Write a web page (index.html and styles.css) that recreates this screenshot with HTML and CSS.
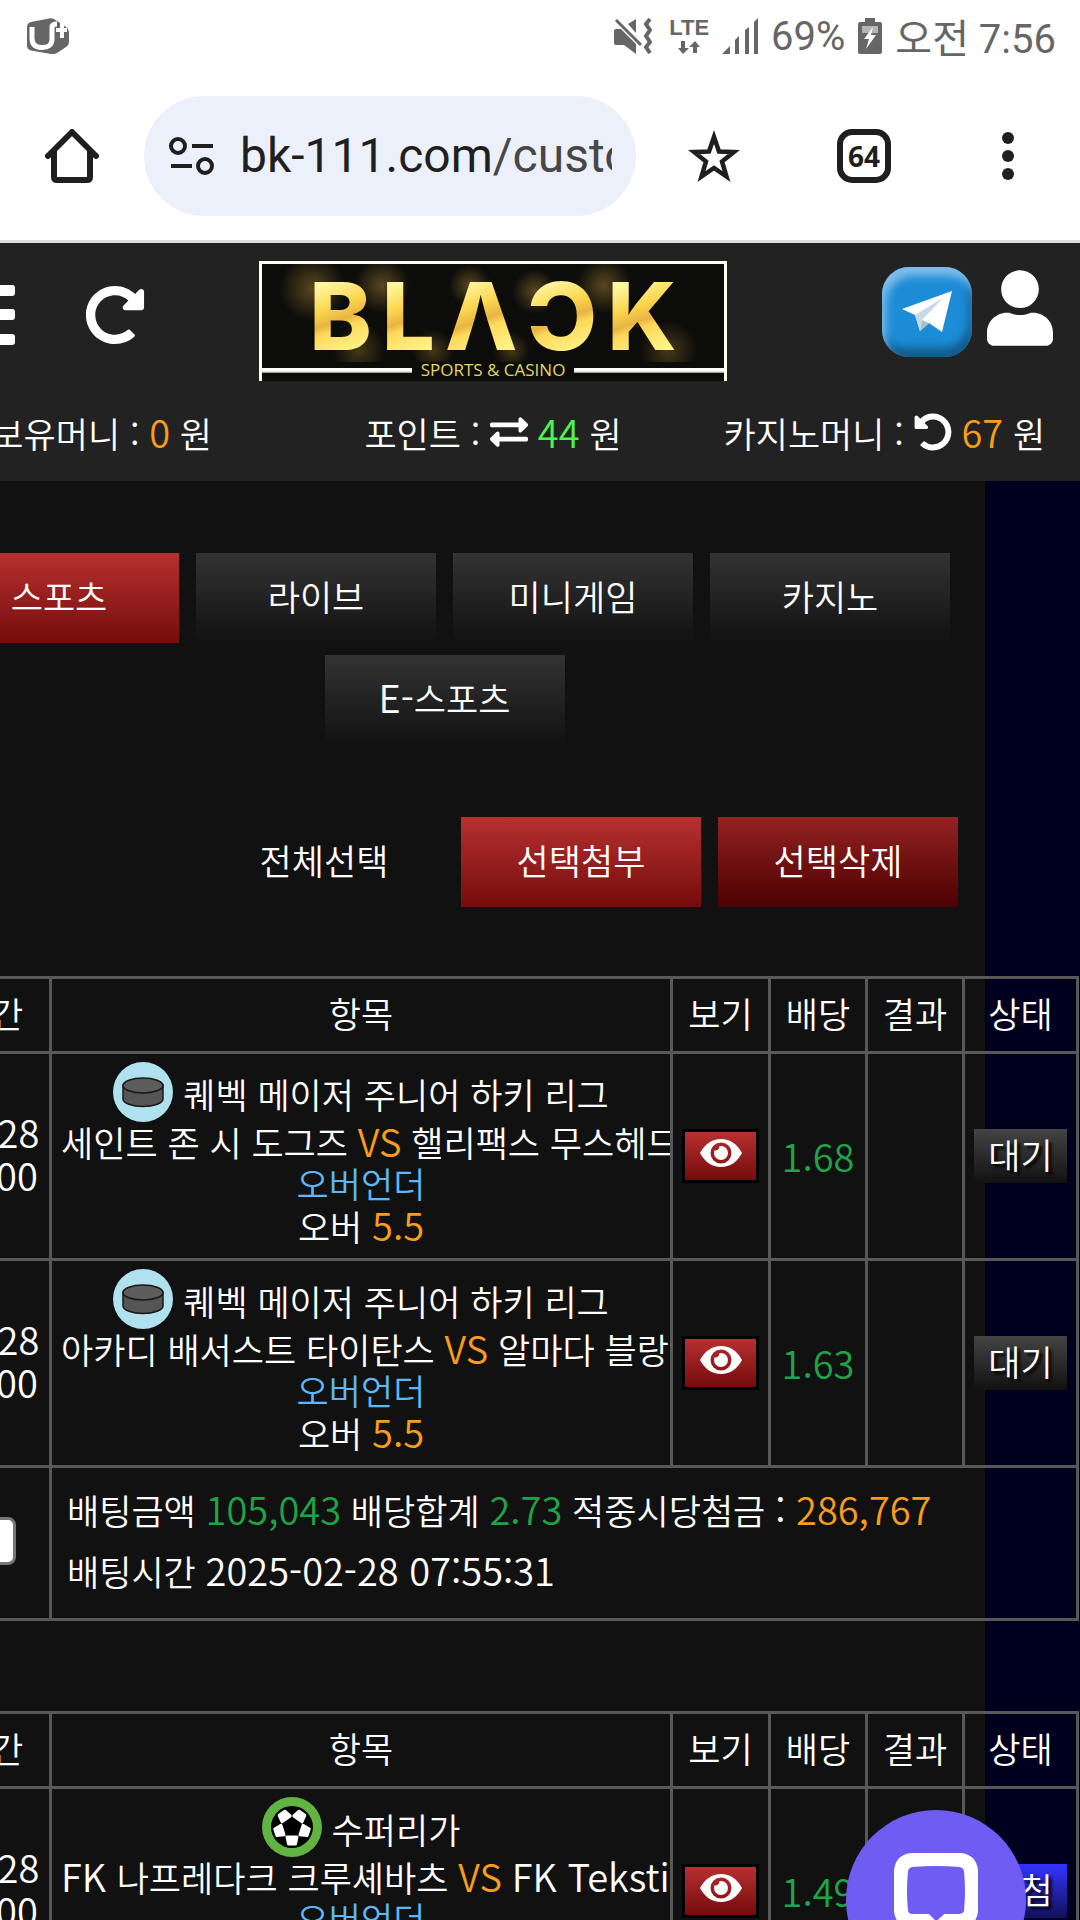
FILE: index.html
```html
<!DOCTYPE html>
<html lang="ko">
<head>
    <meta charset="UTF-8">
    <meta name="viewport" content="width=device-width, initial-scale=1.0">
    <title>BLACK</title>
    <link rel="stylesheet" href="styles.css">
</head>
<body>
    <!-- shared icons -->
    <svg class="defs" aria-hidden="true">
        <symbol id="icon-redo" viewBox="0 0 512 512">
            <path d="M256.455 8c66.269.119 126.437 26.233 170.859 68.685l35.715-35.715C478.149 25.851 504 36.559 504 57.941V192c0 13.255-10.745 24-24 24H345.941c-21.382 0-32.09-25.851-16.971-40.971l41.750-41.750c-30.864-28.899-70.801-44.907-113.230-45.273-92.398-.798-170.283 73.977-169.484 169.442C88.764 348.009 162.184 424 256 424c41.127 0 79.997-14.678 110.629-41.556 4.743-4.161 11.906-3.908 16.368.553l39.662 39.662c4.872 4.872 4.631 12.815-.482 17.433C378.202 479.813 319.926 504 256 504 119.034 504 8.001 392.967 8 256.002 7.999 119.193 119.646 7.755 256.455 8z"/>
        </symbol>
        <symbol id="icon-eye" viewBox="0 0 42 28">
            <path fill-rule="evenodd" d="M0 14C5 5 12 0 21 0s16 5 21 14c-5 9-12 14-21 14S5 23 0 14zM21 3.500a10.500 10.500 0 1 0 0 21 10.500 10.500 0 0 0 0-21z"/>
            <path d="M21 7a7 7 0 1 1-7 7c0-1 .2-2 .6-2.800a3.600 3.600 0 0 0 4.800-3.900C20 7.100 20.500 7 21 7z"/>
        </symbol>
        <symbol id="icon-puck" viewBox="0 0 60 60">
            <circle cx="30" cy="30" r="30" fill="#afe2ee"/>
            <path d="M10 23v14c0 4 9 7.500 20 7.500S50 41 50 37V23z" fill="#555" stroke="#181818" stroke-width="1.500"/>
            <ellipse cx="30" cy="23.500" rx="20" ry="7.500" fill="#5d5d5d" stroke="#181818" stroke-width="1.500"/>
        </symbol>
        <symbol id="icon-ball" viewBox="0 0 60 60">
            <circle cx="30" cy="30" r="30" fill="#61b441"/>
            <circle cx="30" cy="30" r="21" fill="#000"/>
            <g fill="#fff" stroke="#fff" stroke-width="3" stroke-linejoin="round">
                <path d="M25 40h10l-1.500 7h-7z"/>
                <path d="M25 40h10l-1.500 7h-7z" transform="rotate(72 30 30)"/>
                <path d="M25 40h10l-1.500 7h-7z" transform="rotate(144 30 30)"/>
                <path d="M25 40h10l-1.500 7h-7z" transform="rotate(216 30 30)"/>
                <path d="M25 40h10l-1.500 7h-7z" transform="rotate(288 30 30)"/>
            </g>
        </symbol>
    </svg>

    <div class="screen">
        <div class="status-bar">
            <svg class="carrier" viewBox="0 0 42 36">
                <path d="M4 4L22 .5q3-.5 5 .5l12 8q3 2 3 5v10q0 3-3 5l-9 6q-3 1.500-6 1L4 32.500q-4-1-4-5V9q0-4 4-5z" fill="#666"/>
                <path d="M5 9v11q0 9 9 9.500 11 .5 11-8.500V9q0-3 5-3" fill="none" stroke="#fff" stroke-width="5"/>
                <path d="M35 4v16M29 12h11" stroke="#fff" stroke-width="4"/>
            </svg>
            <div class="status-right">
                <svg class="mute" viewBox="0 0 38 36">
                    <path d="M0 13q0-2 2-2h5l15 15v10L10 27H2q-2 0-2-2zM14 6l8-5v14z" fill="#666"/>
                    <path d="M2 2l25 25" stroke="#666" stroke-width="3"/>
                    <path d="M36 1l-4 5 4 6-4 6 4 6-4 5 4 6" fill="none" stroke="#666" stroke-width="4"/>
                </svg>
                <div class="lte">
                    <span>LTE</span>
                    <svg viewBox="0 0 22 13"><path d="M3 0h4v7h4l-6 6-5-6h3zM15 12V6h-4l6-6 5 6h-3v6z" fill="#666"/></svg>
                </div>
                <svg class="signal" viewBox="0 0 36 36">
                    <path d="M0 36l8-8v8zM13 22l4-4v18h-4zM23 12l4-3v27h-4zM32 4l4-4v36h-4z" fill="#666"/>
                </svg>
                <span>69%</span>
                <svg class="battery" viewBox="0 0 24 36">
                    <path d="M7 0h10v4h5q2 0 2 2v28q0 2-2 2H2q-2 0-2-2V6q0-2 2-2h5z" fill="#666"/>
                    <path d="M4 8h16v7H4z" fill="#b5b5b5"/>
                    <path d="M15 9L6 21h5L8 31l10-14h-5z" fill="#fff"/>
                </svg>
                <span>오전 7:56</span>
            </div>
        </div>

        <div class="toolbar">
            <button class="tool home" aria-label="홈">
                <svg width="54" height="54" viewBox="0 0 54 54">
                    <path d="M3 27L27 3l24 24" fill="none" stroke="#1f1f1f" stroke-width="6" stroke-linecap="round" stroke-linejoin="round"/>
                    <path d="M9 21v27q0 3 3 3h30q3 0 3-3V21" fill="none" stroke="#1f1f1f" stroke-width="6"/>
                </svg>
            </button>
            <div class="address">
                <svg width="46" height="38" viewBox="0 0 46 38" fill="none" stroke="#1f1f1f">
                    <circle cx="9" cy="9" r="7" stroke-width="4"/>
                    <circle cx="36" cy="29" r="7" stroke-width="4"/>
                    <path d="M23 9h21M2 29h21" stroke-width="4"/>
                </svg>
                <a class="url" href="#">bk-111.com<span>/customer</span></a>
            </div>
            <button class="tool" aria-label="북마크">
                <svg width="52" height="52" viewBox="0 0 52 52">
                    <path d="M26 7l5 14.500 15 .5-12 9.500 4.500 15L26 38l-12.500 8.500 4.500-15L6 22l15-.5z" fill="none" stroke="#1f1f1f" stroke-width="4.500"/>
                </svg>
            </button>
            <button class="tool"><span class="tab-count">64</span></button>
            <button class="tool menu" aria-label="메뉴">
                <svg width="12" height="48" viewBox="0 0 12 48">
                    <circle cx="6" cy="6" r="6"/><circle cx="6" cy="24" r="6"/><circle cx="6" cy="42" r="6"/>
                </svg>
            </button>
        </div>

        <div class="page">
            <header class="header">
                <div class="header-top">
                    <div class="header-left">
                        <button class="icon-btn" aria-label="전체메뉴">
                            <svg width="60" height="60" viewBox="0 0 60 60">
                                <rect width="60" height="11" rx="3"/><rect y="24" width="60" height="11" rx="3"/><rect y="49" width="60" height="11" rx="3"/>
                            </svg>
                        </button>
                        <button class="icon-btn" aria-label="새로고침">
                            <svg width="60" height="60"><use href="#icon-redo"/></svg>
                        </button>
                    </div>
                    <a class="logo" href="#">
                        <span class="logo-name">
                            <span>B</span><span>L</span><span>Λ</span><span>Ɔ</span><span>K</span>
                        </span>
                        <span class="logo-sub">SPORTS &amp; CASINO</span>
                    </a>
                    <div class="header-right">
                        <a class="telegram" href="#" aria-label="텔레그램">
                            <svg width="50" height="42" viewBox="0 0 50 42">
                                <path d="M0 18L50 0 40 41 27 32 18 40 13 24z" fill="#fff"/>
                                <path d="M13 24L41 7 20 29l-2 11z" fill="#c9d7e6"/>
                                <path d="M18 40l2-11 7 3z" fill="#a9bfd1"/>
                            </svg>
                        </a>
                        <a class="user" href="#" aria-label="내정보">
                            <svg width="66" height="76" viewBox="0 0 448 512">
                                <path d="M224 256c70.700 0 128-57.300 128-128S294.700 0 224 0 96 57.300 96 128s57.300 128 128 128zm89.600 32h-16.700c-22.200 10.200-46.900 16-72.900 16s-50.600-5.800-72.900-16h-16.700C60.200 288 0 348.200 0 422.400V464c0 26.500 21.500 48 48 48h352c26.500 0 48-21.500 48-48v-41.600c0-74.200-60.200-134.400-134.400-134.400z"/>
                            </svg>
                        </a>
                    </div>
                </div>
                <div class="money">
                    <div>보유머니 : <span class="orange">0</span> 원</div>
                    <div>포인트 :
                        <svg width="38" height="38" viewBox="0 0 512 512"><path d="M0 168v-16c0-13.255 10.745-24 24-24h360V80c0-21.367 25.899-32.042 40.971-16.971l80 80c9.372 9.373 9.372 24.569 0 33.941l-80 80C409.956 271.982 384 261.456 384 240v-48H24c-13.255 0-24-10.745-24-24zm488 152H128v-48c0-21.314-25.862-32.080-40.971-16.971l-80 80c-9.372 9.373-9.372 24.569 0 33.941l80 80C102.057 463.997 128 453.437 128 432v-48h360c13.255 0 24-10.745 24-24v-16c0-13.255-10.745-24-24-24z"/></svg>
                        <span class="lime">44</span> 원</div>
                    <div>카지노머니 :
                        <svg width="38" height="38" viewBox="0 0 512 512"><use href="#icon-redo" transform="matrix(-1 0 0 1 512 0)"/></svg>
                        <span class="orange">67</span> 원</div>
                </div>
            </header>

            <main class="panel">
                <div class="tabs">
                    <button class="btn red">스포츠</button>
                    <button class="btn">라이브</button>
                    <button class="btn">미니게임</button>
                    <button class="btn">카지노</button>
                    <button class="btn"><span class="latin">E-</span>스포츠</button>
                </div>
                <div class="actions">
                    <button class="btn plain">전체선택</button>
                    <button class="btn red">선택첨부</button>
                    <button class="btn dark-red">선택삭제</button>
                </div>

                <table class="bets">
                    <colgroup>
                        <col class="col-time"><col><col class="col-view"><col class="col-num"><col class="col-num"><col class="col-state">
                    </colgroup>
                    <tr>
                        <th>시간</th><th>항목</th><th>보기</th><th>배당</th><th>결과</th><th>상태</th>
                    </tr>
                    <tr class="bet">
                        <td><span class="latin">02-28<br>09:00</span></td>
                        <td>
                            <div class="league"><svg width="60" height="60"><use href="#icon-puck"/></svg><span>퀘벡 메이저 주니어 하키 리그</span></div>
                            <div class="teams">세인트 존 시 도그즈 <span class="orange">VS</span> 핼리팩스 무스헤드</div>
                            <div class="blue">오버언더</div>
                            <div>오버 <span class="orange">5.5</span></div>
                        </td>
                        <td><button class="view" aria-label="보기"><svg width="42" height="28"><use href="#icon-eye"/></svg></button></td>
                        <td><span class="green">1.68</span></td>
                        <td></td>
                        <td><button class="state">대기</button></td>
                    </tr>
                    <tr class="bet">
                        <td><span class="latin">02-28<br>09:00</span></td>
                        <td>
                            <div class="league"><svg width="60" height="60"><use href="#icon-puck"/></svg><span>퀘벡 메이저 주니어 하키 리그</span></div>
                            <div class="teams">아카디 배서스트 타이탄스 <span class="orange">VS</span> 알마다 블랑빌</div>
                            <div class="blue">오버언더</div>
                            <div>오버 <span class="orange">5.5</span></div>
                        </td>
                        <td><button class="view" aria-label="보기"><svg width="42" height="28"><use href="#icon-eye"/></svg></button></td>
                        <td><span class="green">1.63</span></td>
                        <td></td>
                        <td><button class="state">대기</button></td>
                    </tr>
                    <tr class="summary">
                        <td><input type="checkbox" aria-label="선택"></td>
                        <td colspan="5">
                            배팅금액 <span class="green">105,043</span> 배당합계 <span class="green">2.73</span> 적중시당첨금 <span class="latin">: </span><span class="orange">286,767</span><br>
                            배팅시간 <span class="latin">2025-02-28 07:55:31</span>
                        </td>
                    </tr>
                </table>

                <table class="bets">
                    <colgroup>
                        <col class="col-time"><col><col class="col-view"><col class="col-num"><col class="col-num"><col class="col-state">
                    </colgroup>
                    <tr>
                        <th>시간</th><th>항목</th><th>보기</th><th>배당</th><th>결과</th><th>상태</th>
                    </tr>
                    <tr class="bet">
                        <td><span class="latin">02-28<br>03:00</span></td>
                        <td>
                            <div class="league"><svg width="60" height="60"><use href="#icon-ball"/></svg><span>수퍼리가</span></div>
                            <div class="teams"><span class="latin">FK </span>나프레다크 크루셰바츠 <span class="orange">VS</span> <span class="latin">FK Tekstilac</span></div>
                            <div class="blue">오버언더</div>
                            <div>오버 <span class="orange">2.5</span></div>
                        </td>
                        <td><button class="view" aria-label="보기"><svg width="42" height="28"><use href="#icon-eye"/></svg></button></td>
                        <td><span class="green">1.49</span></td>
                        <td></td>
                        <td><button class="state win">당첨</button></td>
                    </tr>
                </table>
            </main>
        </div>

        <button class="chat" aria-label="채팅 상담">
            <svg width="84" height="84" viewBox="0 0 84 84">
                <path d="M18 7q24-2 48 0 10 1 11 11 2 20 0 40-1 9-11 10H53L42 78 32 68H18Q8 67 7 58 5 38 7 18 8 8 18 7z" fill="none" stroke="#fff" stroke-width="14"/>
            </svg>
        </button>
    </div>
</body>
</html>
```

FILE: styles.css
```css
* {
    box-sizing: border-box;
}
body {
    margin: 0;
    background: #00001e;
    color: #fff;
    font-family: "Noto Sans CJK KR", sans-serif;
    font-weight: 350;
    font-size: 35px;
}
button {
    font: inherit;
    color: inherit;
    padding: 0;
    border: 0;
    background: none;
}
a {
    color: inherit;
    text-decoration: none;
}
svg {
    flex: none;
}
.defs {
    display: none;
}
.screen {
    position: relative;
    height: 100vh;
    overflow: hidden;
}

/* phone status bar */
.status-bar {
    display: flex;
    justify-content: space-between;
    align-items: center;
    height: 72px;
    padding: 0 24px 0 27px;
    background: #fff;
    color: #666;
    font-family: Roboto, "Noto Sans CJK KR", sans-serif;
    font-weight: 400;
    font-size: 40px;
}
.carrier {
    width: 42px;
    height: 36px;
}
.status-right {
    display: flex;
    align-items: center;
    gap: 13px;
}
.mute {
    width: 38px;
    height: 36px;
    margin-right: 4px;
}
.lte {
    display: flex;
    flex-direction: column;
    align-items: center;
    gap: 4px;
    font: bold 22px/18px "Liberation Sans", sans-serif;
}
.lte svg {
    width: 22px;
    height: 13px;
}
.signal {
    width: 36px;
    height: 36px;
}
.battery {
    width: 24px;
    height: 36px;
}

/* browser toolbar */
.toolbar {
    display: flex;
    align-items: center;
    height: 171px;
    background: #fff;
    border-bottom: 3px solid #dadddb;
}
.tool {
    display: flex;
    justify-content: center;
    align-items: center;
    width: 150px;
    height: 120px;
}
.home {
    width: 144px;
}
.menu {
    width: 141px;
    padding-right: 3px;
}
.menu svg {
    fill: #1f1f1f;
}
.address {
    flex: 1;
    min-width: 0;
    display: flex;
    align-items: center;
    gap: 25px;
    height: 120px;
    margin-right: 3px;
    padding: 0 24px 0 25px;
    border-radius: 60px;
    background: #ecf0fa;
}
.url {
    flex: 1;
    overflow: hidden;
    white-space: nowrap;
    color: #1f1f1f;
    font: 48px/60px Roboto, sans-serif;
}
.url span {
    color: #474747;
}
.tab-count {
    width: 54px;
    height: 54px;
    border: 6px solid #1f1f1f;
    border-radius: 15px;
    color: #1f1f1f;
    font: bold 28px/42px "Open Sans", sans-serif;
}

/* site, panned to the right past its left edge */
.page {
    margin-left: -98px;
}
.header {
    background: #222;
}
.header-top {
    display: grid;
    grid-template-columns: 1fr 468px 1fr;
    padding: 18px 0 0 4px;
}
.header-left {
    display: flex;
    align-items: center;
    gap: 70px;
    height: 108px;
    padding-left: 49px;
}
.icon-btn {
    height: 60px;
    fill: #fff;
}
.header-right {
    display: flex;
    justify-content: flex-end;
    gap: 15px;
    padding: 6px 27px 0 0;
}
.telegram {
    display: flex;
    align-items: center;
    justify-content: center;
    width: 90px;
    height: 90px;
    border-radius: 27px;
    background: #1c8cd6;
    box-shadow: inset 4px 9px 8px #7fbdea, inset -3px -9px 9px #125b8c;
}
.user {
    padding-top: 3px;
    fill: #fff;
}
.logo {
    display: flex;
    flex-direction: column;
    justify-content: space-between;
    height: 120px;
    background: #0c0c0a;
    border: 3px solid #fffdf0;
    border-bottom: 0;
}
.logo-name {
    display: flex;
    justify-content: center;
    gap: 10px;
    height: 98px;
    padding-top: 2px;
    font: 800 94px/100px Inter, sans-serif;
    color: transparent;
    background: radial-gradient(circle at 11% 25%, #5a4720 0, transparent 8%),
        radial-gradient(circle at 26% 22%, #5a4720 0, transparent 8%),
        radial-gradient(circle at 45% 22%, #5a4720 0, transparent 8%),
        radial-gradient(circle at 59% 28%, #5a4720 0, transparent 8%),
        radial-gradient(circle at 74% 22%, #5a4720 0, transparent 8%),
        radial-gradient(circle at 21% 88%, #463818 0, transparent 7%),
        radial-gradient(circle at 37% 88%, #463818 0, transparent 7%),
        radial-gradient(circle at 54% 88%, #463818 0, transparent 7%),
        radial-gradient(circle at 88% 88%, #463818 0, transparent 7%);
}
.logo-name span {
    background: linear-gradient(160deg, #fff6a0 20%, #fbd64e 42%, #e8b443 55%, #fcd95a 62%, #fff28a 85%);
    background-clip: text;
    -webkit-background-clip: text;
}
.logo-sub {
    display: flex;
    align-items: center;
    gap: 9px;
    padding-bottom: 3px;
    color: #e0d860;
    font: 17px/16px "Open Sans", sans-serif;
}
.logo-sub::before,
.logo-sub::after {
    content: "";
    flex: 1;
    height: 5px;
    background: linear-gradient(#fff 60%, #8b8568);
}
.money {
    display: grid;
    grid-template-columns: repeat(3, 1fr);
    padding: 6px 0 4px 4px;
    text-align: center;
    line-height: 89px;
    white-space: nowrap;
}
.money svg {
    fill: #fff;
    vertical-align: -3px;
}
.orange {
    color: #f89c1c;
}
.lime {
    color: #4cf54c;
}
.green {
    color: #1fa347;
}
.blue {
    color: #5cb8f5;
}
/* digits and latin letters run a little larger than the hangul */
.orange,
.lime,
.green,
.latin {
    font-size: 38px;
}

.panel {
    margin-right: 95px;
    padding-top: 72px;
    background: #111;
}
.tabs {
    display: flex;
    flex-wrap: wrap;
    justify-content: center;
    gap: 12px 17px;
    padding: 0 30px 0 32px;
}
.btn {
    width: 240px;
    height: 90px;
    padding-bottom: 5px;
    line-height: 42px;
    background: linear-gradient(#333, #111);
}
.btn.red {
    background: linear-gradient(#b73030, #750c0c);
}
.btn.dark-red {
    background: linear-gradient(#942222, #4c0000);
}
.btn.plain {
    background: none;
}
.actions {
    display: flex;
    justify-content: flex-end;
    gap: 17px;
    margin: 72px 27px 69px 0;
}

/* bet tables run past the panel's right edge */
.bets {
    table-layout: fixed;
    width: calc(100% + 66px);
    margin: 0 0 90px 28px;
    border-collapse: collapse;
    line-height: 42px;
    text-align: center;
}
.bets th,
.bets td {
    padding: 0 9px 4px;
    border: 3px solid #585858;
    font-weight: 350;
}
.bets th {
    height: 75px;
    padding: 0 0 4px;
    white-space: nowrap;
}
.bet {
    height: 207px;
}
.col-time {
    width: 119px;
}
.col-view {
    width: 98px;
}
.col-num {
    width: 97px;
}
.col-state {
    width: 114px;
}
.league {
    display: flex;
    justify-content: center;
    align-items: flex-end;
    gap: 10px;
    white-space: nowrap;
    line-height: 52px;
}
.league svg {
    margin-bottom: -2px;
}
.league + .teams,
.teams ~ div {
    height: 42px;
}
.teams {
    margin-right: -9px;
    overflow: hidden;
    white-space: nowrap;
    text-align: left;
}
.view {
    display: flex;
    align-items: center;
    justify-content: center;
    width: 77px;
    height: 54px;
    margin: auto;
    padding-bottom: 6px;
    border: 3px solid #000;
    background: linear-gradient(#b73030, #750c0c);
    fill: #fff;
}
.state {
    width: 93px;
    height: 54px;
    padding-bottom: 4px;
    background: linear-gradient(#444, #111);
    text-shadow: 3px 3px 3px #000;
}
.state.win {
    background: linear-gradient(#3333ff, #11115c);
}
.bets td:nth-child(n+3) {
    padding: 0;
}
.bets .summary td + td {
    height: 153px;
    padding: 11px 15px 17px;
    text-align: left;
    line-height: 60px;
}
.summary input {
    appearance: none;
    display: block;
    width: 50px;
    height: 48px;
    margin: auto;
    border: 3px solid #767676;
    border-radius: 8px;
    background: #fff;
}

.chat {
    position: absolute;
    right: 54px;
    bottom: -70px;
    width: 180px;
    height: 180px;
    border-radius: 50%;
    background: #6f5cf3;
}
```
